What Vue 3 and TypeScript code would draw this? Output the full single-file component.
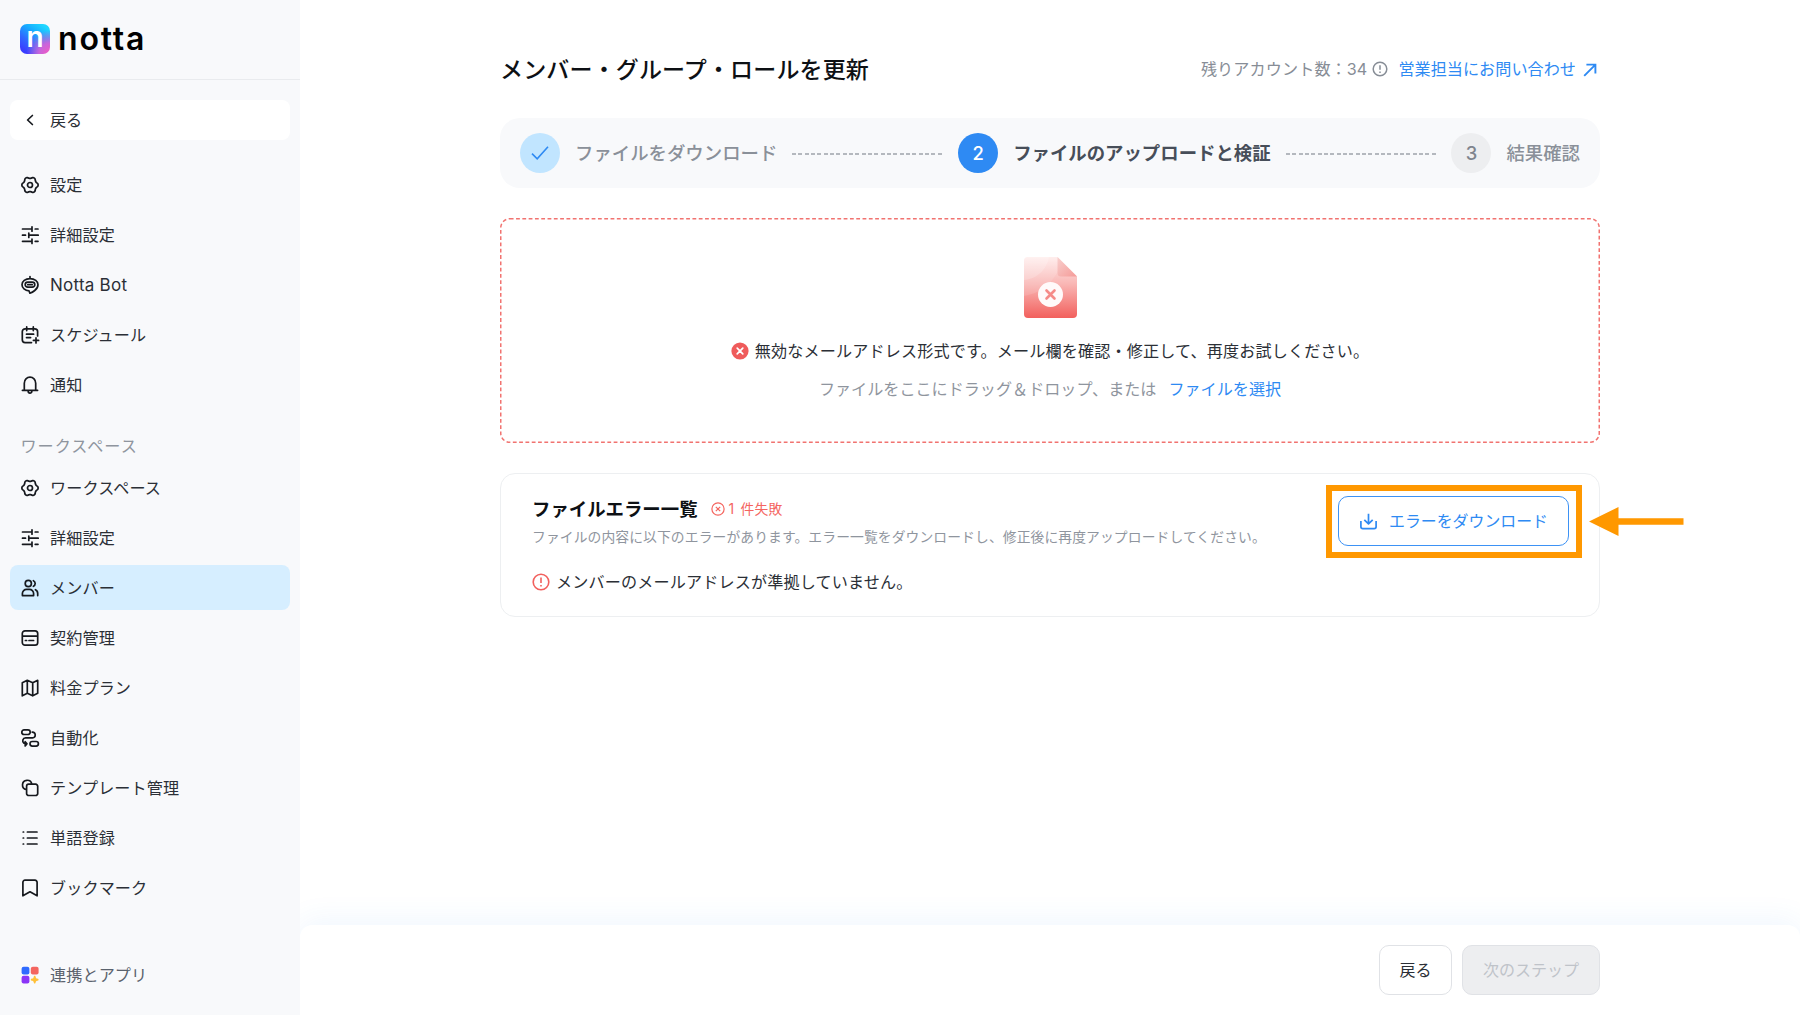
<script setup lang="ts">
interface NavItem {
  label: string
  icon: string
  active?: boolean
  latin?: boolean
}

/** Six-toothed gear outline centred in a 20x20 box. */
function gearPath(): string {
  const pts: string[] = []
  for (let deg = 0; deg < 360; deg += 5) {
    const t = (deg * Math.PI) / 180
    const wave = Math.cos(6 * t)
    const r = 7.4 + 0.75 * Math.sign(wave) * Math.pow(Math.abs(wave), 0.7)
    pts.push(`${(10 + r * Math.cos(t)).toFixed(2)} ${(10 + r * Math.sin(t)).toFixed(2)}`)
  }
  return `M${pts.join('L')}Z`
}

const icons: Record<string, string> = {
  gear: `${gearPath()}M12.5 10a2.5 2.5 0 1 1-5 0a2.5 2.5 0 0 1 5 0Z`,
  sliders: 'M2.5 4H12M12 1.8V6.2M15.2 4H18M2.5 10.2H5.5M8.8 8V12.4M8.8 10.2H18.2M2.5 16.3H12M12 14.1V18.5M15.2 16.3H18',
  bot: 'M10 1.5V3.7M10 3.7C5.3 3.7 2 6.3 2 9.7C2 13 5 15.6 9 15.8L9.9 18.2C12 17.5 18 14.6 18 9.7C18 6.3 14.7 3.7 10 3.7ZM7.7 7.2H12.3A2.5 2.5 0 0 1 12.3 12.2H7.7A2.5 2.5 0 0 1 7.7 7.2ZM7.8 9.7H12.2',
  calendar: 'M17.6 11V6.6A2.8 2.8 0 0 0 14.8 3.8H5.1A2.8 2.8 0 0 0 2.3 6.6V14.8A2.8 2.8 0 0 0 5.1 17.6H11.5M6.7 1.9V5.6M13.3 1.9V5.6M6.5 9.2H13.6M6.5 12.6H10.6M16 12.8V18M13.4 15.4H18.6',
  bell: 'M2.4 15.3H17.6M4.3 15.3V8.2A5.7 6 0 0 1 15.7 8.2V15.3M8.2 16V16.6A1.8 1.5 0 0 0 11.8 16.6V16',
  members: 'M11.4 5.5a3.1 3.1 0 1 1-6.2 0a3.1 3.1 0 0 1 6.2 0ZM2.4 17.6V15.6A4.2 4.2 0 0 1 6.6 11.4H9.4A4.2 4.2 0 0 1 13.6 15.6V17.6ZM13.4 2.7A3.1 3.1 0 0 1 13.4 8.3M15.4 11.7A4 4 0 0 1 17.7 15.4V17.6',
  card: 'M5 2.9H15A2.7 2.7 0 0 1 17.7 5.6V14.4A2.7 2.7 0 0 1 15 17.1H5A2.7 2.7 0 0 1 2.3 14.4V5.6A2.7 2.7 0 0 1 5 2.9ZM2.3 8.2H17.7M5.4 12.5H6.6M9 12.5H13.6',
  map: 'M2.3 4.8L7.3 2.3L12.7 4.8L17.7 2.3V15.3L12.7 17.8L7.3 15.3L2.3 17.8ZM7.3 2.3V15.3M12.7 4.8V17.8',
  flow: 'M4.1 1.9H7.9A2.3 2.3 0 0 1 7.9 6.5H4.1A2.3 2.3 0 0 1 4.1 1.9ZM12.3 13.5H16.1A2.3 2.3 0 0 1 16.1 18.1H12.3A2.3 2.3 0 0 1 12.3 13.5ZM12.2 4.2A2.85 2.85 0 0 1 12.5 9.9H5.6A2.9 2.9 0 0 0 4 15.2M5.2 13.7V18L7 15.8Z',
  template: 'M8.7 6.2H15.6A2.1 2.1 0 0 1 17.7 8.3V15.4A2.1 2.1 0 0 1 15.6 17.5H8.7A2.1 2.1 0 0 1 6.6 15.4V8.3A2.1 2.1 0 0 1 8.7 6.2ZM6.4 11.6A4.7 4.7 0 1 1 11.8 6',
  list: 'M3.2 4H3.6M3.2 10H3.6M3.2 16H3.6M7.4 4H17M7.4 10H17M7.4 16H17',
  bookmark: 'M5 2.2H15A2.1 2.1 0 0 1 17.1 4.3V17.8L10 13.8L2.9 17.8V4.3A2.1 2.1 0 0 1 5 2.2Z',
}

const personal: NavItem[] = [
  { label: '設定', icon: 'gear' },
  { label: '詳細設定', icon: 'sliders' },
  { label: 'Notta Bot', icon: 'bot', latin: true },
  { label: 'スケジュール', icon: 'calendar' },
  { label: '通知', icon: 'bell' },
]

const workspace: NavItem[] = [
  { label: 'ワークスペース', icon: 'gear' },
  { label: '詳細設定', icon: 'sliders' },
  { label: 'メンバー', icon: 'members', active: true },
  { label: '契約管理', icon: 'card' },
  { label: '料金プラン', icon: 'map' },
  { label: '自動化', icon: 'flow' },
  { label: 'テンプレート管理', icon: 'template' },
  { label: '単語登録', icon: 'list' },
  { label: 'ブックマーク', icon: 'bookmark' },
]
</script>

<template>
  <div class="app">
    <aside class="sidebar">
      <header class="brand">
        <span class="brand-mark">n</span>
        <span class="brand-name">notta</span>
      </header>

      <button class="back">
        <svg class="ico" viewBox="0 0 20 20"><path d="M12.4 5.5L7.6 10L12.4 14.5" /></svg>
        <span>戻る</span>
      </button>

      <nav class="nav nav-personal">
        <a v-for="item in personal" :key="item.label" class="nav-item">
          <svg class="ico" viewBox="0 0 20 20"><path :d="icons[item.icon]" /></svg>
          <span :class="{ latin: item.latin }">{{ item.label }}</span>
        </a>
      </nav>

      <div class="section">ワークスペース</div>
      <nav class="nav">
        <a v-for="item in workspace" :key="item.label" class="nav-item" :class="{ active: item.active }">
          <svg class="ico" viewBox="0 0 20 20"><path :d="icons[item.icon]" /></svg>
          <span>{{ item.label }}</span>
        </a>
      </nav>

      <a class="nav-item apps">
        <svg class="apps-ico" viewBox="0 0 20 20">
          <rect x="1.6" y="1.7" width="7.8" height="7.8" rx="2" fill="#2f6bff" />
          <rect x="10.8" y="1.7" width="7.8" height="7.8" rx="2" fill="#f4655f" />
          <rect x="1.6" y="10.8" width="7.8" height="7.8" rx="2" fill="#8b35f7" />
          <path d="M14.7 10.8C15.4 10.8 15.6 11.5 15.8 12.3C16 13.2 16.2 13.4 17.1 13.6C17.9 13.8 18.6 14 18.6 14.7C18.6 15.4 17.9 15.6 17.1 15.8C16.2 16 16 16.2 15.8 17.1C15.6 17.9 15.4 18.6 14.7 18.6C14 18.6 13.8 17.9 13.6 17.1C13.4 16.2 13.2 16 12.3 15.8C11.5 15.6 10.8 15.4 10.8 14.7C10.8 14 11.5 13.8 12.3 13.6C13.2 13.4 13.4 13.2 13.6 12.3C13.8 11.5 14 10.8 14.7 10.8Z" fill="#ffc038" />
        </svg>
        <span>連携とアプリ</span>
      </a>
    </aside>

    <main class="main">
      <div class="content">
        <div class="head">
          <h1>メンバー・グループ・ロールを更新</h1>
          <div class="quota">
            <span class="quota-text">残りアカウント数：34</span>
            <svg class="info" viewBox="0 0 16 16"><circle cx="8" cy="8" r="6.8" /><path d="M8 4.2V8.8M8 10.6V11.9" /></svg>
            <a class="link quota-link">営業担当にお問い合わせ</a>
            <svg class="ext" viewBox="0 0 14 14"><path d="M1.2 12.8L12.2 1.8M3.4 1.6H12.4V10.6" /></svg>
          </div>
        </div>

        <div class="steps">
          <span class="dot done">
            <svg viewBox="0 0 20 20"><path d="M2 10.6L7.2 15.8L18 3.8" /></svg>
          </span>
          <span class="step">ファイルをダウンロード</span>
          <i class="dash"></i>
          <span class="dot current">2</span>
          <span class="step current-text">ファイルのアップロードと検証</span>
          <i class="dash"></i>
          <span class="dot">3</span>
          <span class="step">結果確認</span>
        </div>

        <section class="drop">
          <svg class="drop-line" viewBox="0 0 1100 225">
            <rect x=".75" y=".75" width="1098.5" height="223.5" rx="9" />
          </svg>
          <svg class="file" viewBox="0 0 53 61">
            <defs>
              <linearGradient id="sheet" x1="0" y1="0" x2="0" y2="1">
                <stop offset="0" stop-color="#ffeceb" />
                <stop offset=".45" stop-color="#f9b5b3" />
                <stop offset="1" stop-color="#f2605d" />
              </linearGradient>
              <linearGradient id="fold" x1="0" y1="0" x2="1" y2="1">
                <stop offset="0" stop-color="#f8cfcd" />
                <stop offset="1" stop-color="#f59b98" />
              </linearGradient>
            </defs>
            <path d="M4 0H33.5L53 19.5V57A4 4 0 0 1 49 61H4A4 4 0 0 1 0 57V4A4 4 0 0 1 4 0Z" fill="url(#sheet)" />
            <path d="M4 0H25C23 12 13 22 0 23V4A4 4 0 0 1 4 0Z" fill="#fff" opacity=".2" />
            <path d="M0 39C19 36 34 22 37 3.5L33.5 0H4A4 4 0 0 0 0 4Z" fill="#fff" opacity=".12" />
            <path d="M33.5 0L53 19.5H37A3.5 3.5 0 0 1 33.5 16Z" fill="url(#fold)" />
            <circle cx="26.5" cy="37.5" r="12.5" fill="#fffafa" />
            <path d="M22.5 33.5L30.5 41.5M30.5 33.5L22.5 41.5" stroke="#f58b88" stroke-width="2.6" stroke-linecap="round" />
          </svg>
          <p class="drop-error">
            <svg class="bad" viewBox="0 0 18 18">
              <circle cx="9" cy="9" r="8.6" fill="#ef5b5b" />
              <path d="M6.2 6.2L11.8 11.8M11.8 6.2L6.2 11.8" stroke="#fff" stroke-width="1.7" stroke-linecap="round" />
            </svg>
            <span>無効なメールアドレス形式です。メール欄を確認・修正して、再度お試しください。</span>
          </p>
          <p class="drop-hint">
            <span>ファイルをここにドラッグ＆ドロップ、または</span>
            <a class="link">ファイルを選択</a>
          </p>
        </section>

        <section class="errors">
          <div class="errors-text">
            <div class="errors-title">
              <h2>ファイルエラー一覧</h2>
              <svg class="fail" viewBox="0 0 14 14"><circle cx="7" cy="7" r="6.1" /><path d="M4.8 4.8L9.2 9.2M9.2 4.8L4.8 9.2" /></svg>
              <span class="count">1 件失敗</span>
            </div>
            <p class="desc">ファイルの内容に以下のエラーがあります。エラー一覧をダウンロードし、修正後に再度アップロードしてください。</p>
            <p class="err-item">
              <svg class="warn" viewBox="0 0 18 18"><circle cx="9" cy="9" r="7.8" /><path d="M9 4.6V9.9M9 12.1V13.5" /></svg>
              <span>メンバーのメールアドレスが準拠していません。</span>
            </p>
          </div>
          <div class="download-wrap">
            <button class="download">
              <svg viewBox="0 0 20 20"><path d="M10 1.8V12.4M5.6 8.3L10 12.6L14.4 8.3M2 9.6V15.6A2 2 0 0 0 4 17.6H16A2 2 0 0 0 18 15.6V9.6" /></svg>
              <span>エラーをダウンロード</span>
            </button>
            <span class="marker"></span>
            <svg class="arrow" viewBox="0 0 95 29"><path d="M0 14.5L29.5 0V11.3H94.5V17.7H29.5V29Z" fill="#ff9800" /></svg>
          </div>
        </section>
      </div>

      <footer class="footer">
        <div class="footer-inner">
          <button class="btn">戻る</button>
          <button class="btn disabled">次のステップ</button>
        </div>
      </footer>
    </main>
  </div>
</template>

<style>
body {
  margin: 0;
  background: #fff;
}
</style>

<style scoped>
.app {
  display: flex;
  width: 1800px;
  height: 1015px;
  overflow: hidden;
  font-family: Inter, "Noto Sans CJK JP", sans-serif;
  font-size: 16.1px;
  line-height: 24px;
  color: #2b2f36;
}
.app * {
  box-sizing: border-box;
}
p,
h1,
h2 {
  margin: 0;
}
svg {
  display: block;
  flex: none;
  fill: none;
  stroke-linejoin: round;
}
button {
  font: inherit;
  color: inherit;
  margin: 0;
}
span,
a,
h1,
h2 {
  white-space: nowrap;
}

.sidebar {
  position: relative;
  z-index: 1;
  display: flex;
  flex-direction: column;
  flex: none;
  width: 300px;
  background: #f8f9fb;
}
.brand {
  display: flex;
  align-items: center;
  height: 79.5px;
  padding: 0 20px 1px;
  border-bottom: 1px solid #e9ebee;
}
.brand-mark {
  width: 30px;
  height: 30px;
  border-radius: 7px;
  background:
    radial-gradient(circle at 100% 100%, #f759c0 0, #c765dc 26%, rgba(150, 110, 240, 0) 56%),
    linear-gradient(35deg, #3a3dff 12%, #2f6bff 38%, #16a8ff 62%, #1fd6ff 88%);
  color: #fff;
  font-size: 28px;
  font-weight: 600;
  line-height: 27px;
  text-align: center;
}
.brand-name {
  margin-left: 8px;
  color: #000;
  font-size: 32px;
  font-weight: 600;
  line-height: 30px;
  letter-spacing: 1.8px;
}
.ico {
  width: 20px;
  height: 20px;
  stroke: #16191e;
  stroke-width: 1.7;
  stroke-linecap: round;
}
.back {
  display: flex;
  align-items: center;
  gap: 10px;
  height: 40px;
  margin: 20.5px 10px 0;
  padding: 0 10px;
  border: 0;
  border-radius: 8px;
  background: #fff;
}
.nav {
  display: flex;
  flex-direction: column;
  gap: 5px;
  padding: 0 10px;
}
.nav-personal {
  margin-top: 22.5px;
}
.nav-item {
  display: flex;
  align-items: center;
  gap: 10px;
  height: 45px;
  padding: 0 10px;
  border-radius: 8px;
  letter-spacing: 0.12px;
}
.nav-item.active {
  background: #d6eeff;
}
.latin {
  font-size: 17px;
  letter-spacing: 0.25px;
}
.section {
  height: 24px;
  margin: 26.5px 0 7px 20.5px;
  color: #8f959e;
  letter-spacing: 1px;
}
.apps {
  margin: 42.5px 10px 0;
  color: #5a626d;
}
.apps-ico {
  width: 20px;
  height: 20px;
}

.main {
  display: flex;
  flex-direction: column;
  flex: 1;
  background: #fff;
}
.content {
  width: 1100px;
  flex: 1;
  margin-left: 200px;
}
.head {
  display: flex;
  align-items: center;
  justify-content: space-between;
  height: 30px;
  margin-top: 54px;
}
h1 {
  padding-top: 2px;
  color: #0d1014;
  font-size: 23px;
  font-weight: 500;
  line-height: 30px;
  letter-spacing: 0.15px;
}
.quota {
  display: flex;
  align-items: center;
  color: #878d96;
}
.quota-text {
  letter-spacing: 0.12px;
}
.quota-link {
  letter-spacing: 0.05px;
}
.info {
  width: 16px;
  height: 16px;
  margin: 0 10px 1px 5px;
  stroke: #878d96;
  stroke-width: 1.5;
}
.link {
  color: #2e8af3;
}
.ext {
  width: 14px;
  height: 14px;
  margin: 2px 3px 0 7px;
  stroke: #2e8af3;
  stroke-width: 1.9;
  stroke-linejoin: miter;
}

.steps {
  display: flex;
  align-items: center;
  gap: 15px;
  height: 69.5px;
  margin-top: 34px;
  padding: 0 20px;
  border-radius: 20px;
  background: #f8f9fb;
  font-size: 18.4px;
  font-weight: 500;
  color: #8a9099;
}
.dot {
  display: flex;
  flex: none;
  align-items: center;
  justify-content: center;
  width: 40px;
  height: 40px;
  border-radius: 50%;
  background: #edeef0;
  color: #7f858e;
}
.dot.done {
  background: #c1e5ff;
}
.dot.done svg {
  width: 20px;
  height: 20px;
  stroke: #2e8af3;
  stroke-width: 1.6;
  stroke-linejoin: miter;
}
.dot.current {
  background: #2e8af3;
  color: #fff;
}
.current-text {
  color: #474e59;
  font-weight: 600;
}
.dash {
  flex: 1;
  height: 2px;
  margin-top: 2px;
  background: repeating-linear-gradient(90deg, #b4b8be 0 4px, transparent 4px 6.33px);
}

.drop {
  position: relative;
  display: flex;
  flex-direction: column;
  align-items: center;
  height: 225px;
  margin-top: 30px;
  padding-top: 39.5px;
}
.drop-line {
  position: absolute;
  inset: 0;
  width: 1100px;
  height: 225px;
  stroke: #f17370;
  stroke-width: 1.5;
  stroke-dasharray: 3.8 2.5;
}
.file {
  width: 53px;
  height: 61px;
}
.drop-error {
  display: flex;
  align-items: center;
  gap: 6px;
  margin-top: 21px;
  letter-spacing: 0.15px;
}
.bad {
  width: 18px;
  height: 18px;
}
.drop-hint {
  display: flex;
  gap: 12px;
  margin-top: 14px;
  color: #8f959e;
}

.errors {
  display: flex;
  justify-content: space-between;
  height: 144.5px;
  margin-top: 30px;
  padding: 22.5px 30px 0 31px;
  border: 1px solid #edeff1;
  border-radius: 15px;
}
.errors-text {
  margin-top: -1.1px;
}
.errors-title {
  display: flex;
  align-items: center;
  height: 28px;
}
h2 {
  color: #0d1014;
  font-size: 18.4px;
  font-weight: 600;
}
.fail {
  width: 14px;
  height: 14px;
  margin: 0 4px 0 13px;
  stroke: #f4655f;
  stroke-width: 1.2;
}
.count {
  color: #f4655f;
  font-size: 13.8px;
  letter-spacing: 0.2px;
  word-spacing: 2px;
}
.desc {
  height: 20px;
  margin-top: 4.5px;
  color: #8f959e;
  font-size: 13.8px;
  line-height: 20px;
  letter-spacing: 0.09px;
  white-space: nowrap;
}
.err-item {
  display: flex;
  align-items: center;
  gap: 6px;
  margin-top: 22.6px;
  letter-spacing: 0.15px;
}
.warn {
  width: 18px;
  height: 18px;
  stroke: #f2605d;
  stroke-width: 1.6;
}
.download-wrap {
  position: relative;
  width: 231px;
  height: 50px;
}
.download {
  display: flex;
  align-items: center;
  justify-content: center;
  gap: 11px;
  width: 231px;
  height: 50px;
  padding: 1px 0 0;
  border: 1px solid #3d92f5;
  border-radius: 10px;
  background: #fff;
  color: #2e8af3;
  font-size: 15.9px;
}
.download svg {
  width: 19px;
  height: 19px;
  stroke: #2e8af3;
  stroke-width: 1.8;
}
.marker {
  position: absolute;
  inset: -11.5px -13px -11.5px -12px;
  border: 6px solid #ff9800;
}
.arrow {
  position: absolute;
  left: 251px;
  top: 10.5px;
  width: 95px;
  height: 29px;
}

.footer {
  flex: none;
  height: 90.5px;
  border-radius: 12px 12px 0 0;
  background: #fff;
  box-shadow: 0 -4px 30px rgba(46, 138, 243, 0.08);
}
.footer-inner {
  display: flex;
  justify-content: flex-end;
  gap: 10px;
  width: 1300px;
  padding-top: 20.5px;
}
.btn {
  height: 50px;
  padding: 0 19.7px;
  border: 1px solid #e0e2e6;
  border-radius: 10px;
  background: #fff;
  font-size: 16px;
}
.btn.disabled {
  padding: 0 19.9px;
  background: #edeef0;
  color: #bfc3c9;
}
</style>
